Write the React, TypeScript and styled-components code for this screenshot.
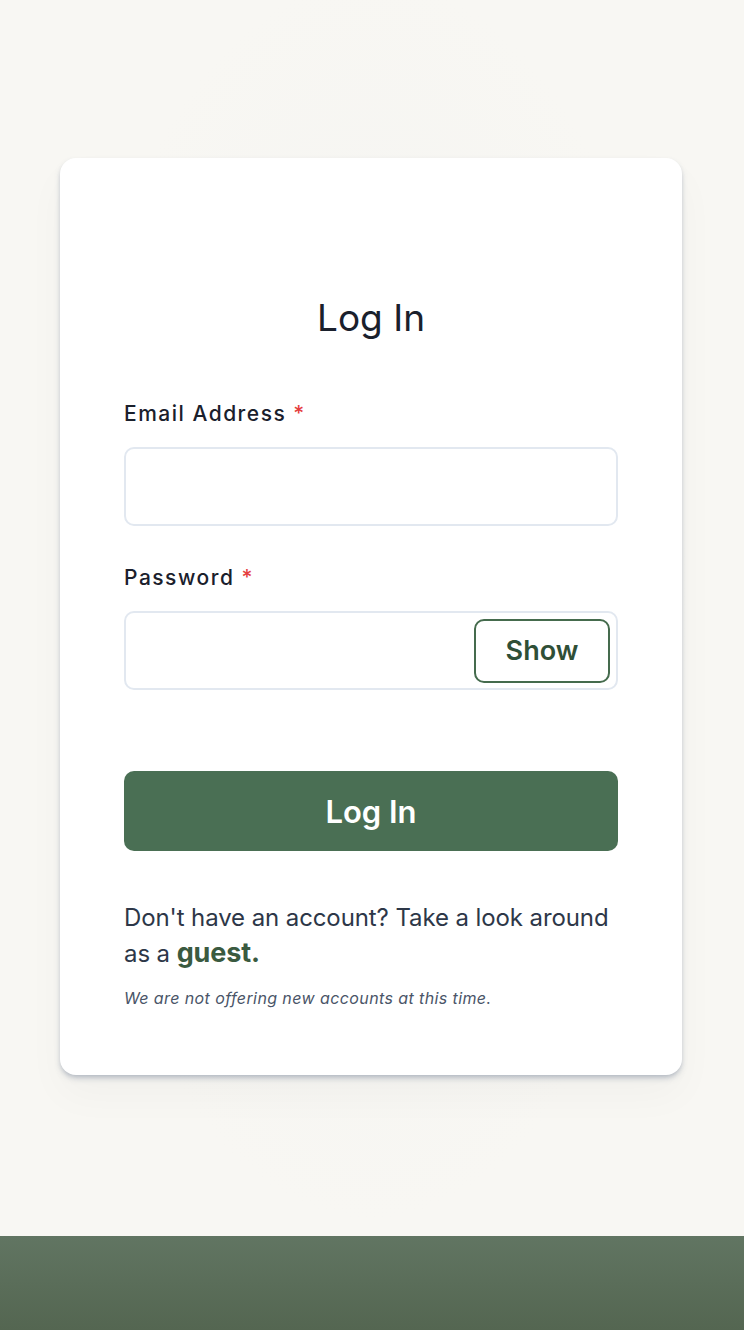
import React from "react";
import styled, { createGlobalStyle } from "styled-components";

const GlobalStyle = createGlobalStyle`
  html, body { margin: 0; padding: 0; }
  body {
    font-family: Inter, "Noto Sans", sans-serif;
    background: #f8f7f3;
  }
  * { box-sizing: border-box; }
`;

const Page = styled.div`
  min-height: 1330px;
  display: flex;
  flex-direction: column;
  background: radial-gradient(ellipse at 50% 45%, #f3f3f1 0%, #f8f7f3 60%);
`;

const Main = styled.main`
  height: 1236px;
  padding-top: 158px;
  padding-right: 2px;
  display: flex;
  justify-content: center;
  align-items: flex-start;
`;

const Card = styled.div`
  width: 622px;
  height: 917px;
  background: #ffffff;
  border-radius: 16px;
  box-shadow: 0 4px 6px -1px rgba(100, 116, 139, 0.35), 0 2px 4px -1px rgba(100, 116, 139, 0.2),
    0 20px 40px rgba(0, 0, 0, 0.03);
  padding: 137px 64px 0;
  display: flex;
  flex-direction: column;
`;

const Title = styled.h1`
  margin: 0;
  text-align: center;
  font-size: 37px;
  font-weight: 400;
  color: #1a202c;
  line-height: 46px;
`;

const Form = styled.form`
  margin-top: 58px;
  display: flex;
  flex-direction: column;
`;

const Field = styled.div<{ $mb: number }>`
  display: flex;
  flex-direction: column;
  margin-bottom: ${(p) => p.$mb}px;
`;

const Label = styled.label`
  font-size: 21px;
  font-weight: 500;
  color: #1a202c;
  line-height: 30px;
  margin-bottom: 18px;
  letter-spacing: 1.5px;
`;

const Req = styled.span`
  color: #e53e3e;
  margin-left: 7px;
`;

const InputWrap = styled.div`
  position: relative;
  height: 79px;
  border: 2px solid #e2e8f0;
  border-radius: 10px;
  display: flex;
  align-items: center;
  justify-content: flex-end;
  padding-right: 6px;
`;

const ShowButton = styled.button`
  width: 136px;
  height: 64px;
  border: 2px solid #456b4d;
  border-radius: 10px;
  background: #ffffff;
  color: #2f4f37;
  font-family: Inter, "Noto Sans", sans-serif;
  font-size: 27px;
  font-weight: 600;
  cursor: pointer;
`;

const Submit = styled.button`
  margin-top: 81px;
  height: 80px;
  border: none;
  border-radius: 10px;
  background: #4a6f54;
  color: #ffffff;
  font-family: Inter, "Noto Sans", sans-serif;
  font-size: 31px;
  font-weight: 600;
  cursor: pointer;
`;

const Prompt = styled.p`
  margin: 49px 0 0;
  font-size: 24px;
  line-height: 36px;
  color: #2d3748;
  letter-spacing: -0.1px;
`;

const Guest = styled.a`
  color: #3a5a40;
  font-weight: 700;
  font-size: 27px;
  line-height: 1;
  text-decoration: none;
`;

const Note = styled.p`
  margin: 16px 0 0;
  font-size: 16px;
  font-style: italic;
  color: #4a5568;
  letter-spacing: 0.4px;
`;

const Footer = styled.footer`
  height: 94px;
  background: linear-gradient(to bottom, #617562, #546651);
`;

export default function App() {
  return (
    <>
      <GlobalStyle />
      <Page>
        <Main>
          <Card>
            <Title>Log In</Title>
            <Form onSubmit={(e) => e.preventDefault()}>
              <Field $mb={37}>
                <Label>
                  Email Address<Req>*</Req>
                </Label>
                <InputWrap />
              </Field>
              <Field $mb={0}>
                <Label>
                  Password<Req>*</Req>
                </Label>
                <InputWrap>
                  <ShowButton type="button">Show</ShowButton>
                </InputWrap>
              </Field>
              <Submit type="submit">Log In</Submit>
            </Form>
            <Prompt>
              Don't have an account? Take a look around as a <Guest href="#">guest.</Guest>
            </Prompt>
            <Note>We are not offering new accounts at this time.</Note>
          </Card>
        </Main>
        <Footer />
      </Page>
    </>
  );
}
